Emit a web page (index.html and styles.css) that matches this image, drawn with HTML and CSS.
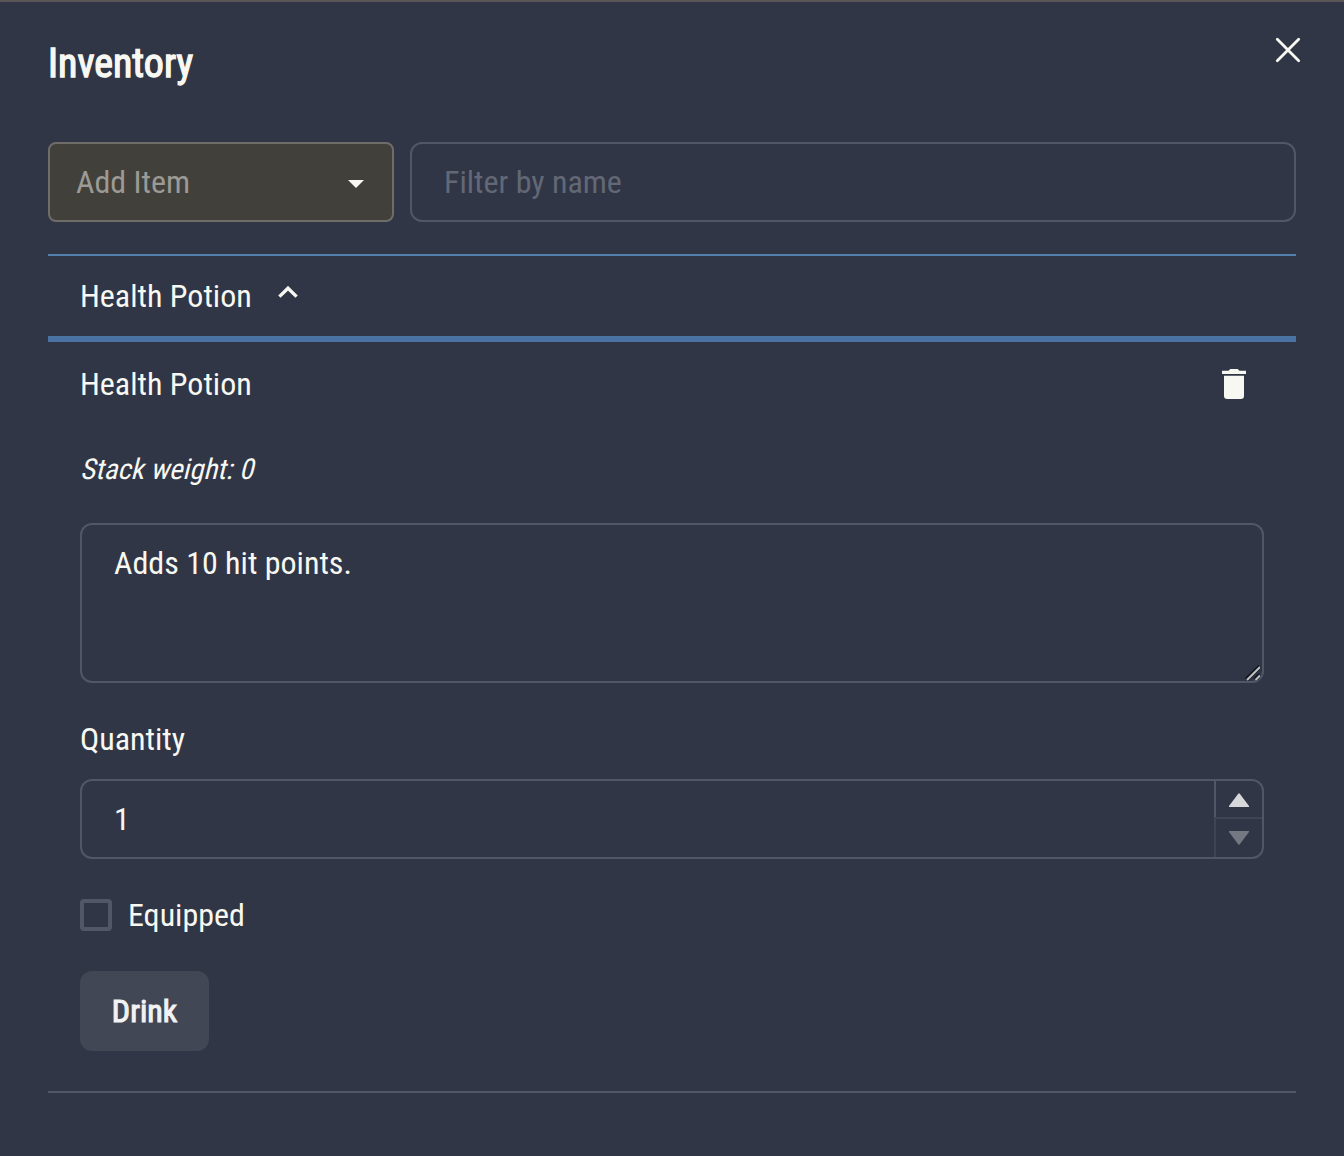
FILE: index.html
```html
<!DOCTYPE html>
<html lang="en">
<head>
<meta charset="utf-8">
<title>Inventory</title>
<link rel="stylesheet" href="styles.css">
</head>
<body>
<main class="panel">
  <header class="header">
    <h1 class="title"><span class="text">Inventory</span></h1>
    <button class="icon-button close" aria-label="Close">
      <svg width="26" height="26" viewBox="0 0 26 26"><path d="M2.300 2.300 23.700 23.700M23.700 2.300 2.300 23.700" fill="none" stroke="currentColor" stroke-width="2.800" stroke-linecap="round"/></svg>
    </button>
  </header>
  <div class="toolbar">
    <div class="select"><span class="text">Add Item</span>
      <svg width="16" height="8" viewBox="0 0 16 8"><path d="M0 0h16L8 8z" fill="#f8f8f2"/></svg>
    </div>
    <div class="field filter"><span class="text">Filter by name</span></div>
  </div>
  <section class="item">
    <div class="item-summary"><span class="text">Health Potion</span>
      <svg class="chevron" width="20" height="12" viewBox="0 0 20 12"><path d="M1.4 10.6 10 2.2l8.6 8.4" fill="none" stroke="currentColor" stroke-width="3.4"/></svg>
    </div>
    <div class="item-body">
      <div class="item-head"><span class="text">Health Potion</span>
        <button class="icon-button trash" aria-label="Delete">
          <svg width="24" height="30" viewBox="0 0 24 30"><path d="M0 1.7h6.5L8.3 0h7.4l1.8 1.7H24V5H0zM2 6.7h20v20.1Q22 30 18.800 30H5.200Q2 30 2 26.800z" fill="currentColor"/></svg>
        </button>
      </div>
      <p class="weight"><span class="text slanted">Stack weight: 0</span></p>
      <div class="field description"><span class="text">Adds 10 hit points.</span>
        <svg class="grip" width="15" height="16" viewBox="0 0 15 16"><g fill="none" stroke="#141920" stroke-width="4.500"><path d="M1.500 14.500 15 1.500M10 14.500 15 10"/></g><g fill="none" stroke="#c0c1c2" stroke-width="2"><path d="M2 15 15 2M10.500 15 15 10.500"/></g></svg>
      </div>
      <div class="label"><span class="text">Quantity</span></div>
      <div class="field quantity"><span class="text">1</span>
        <div class="stepper">
          <div class="step up"><svg width="20" height="14" viewBox="0 0 20 14"><path d="M9.2.8Q10-.4 10.800.8L20 13v1H0v-1z" fill="#d5d7da"/></svg></div>
          <div class="step down"><svg width="20" height="14" viewBox="0 0 20 14"><path d="M9.2 13.200Q10 14.400 10.800 13.200L20 1V0H0v1z" fill="#747882"/></svg></div>
        </div>
      </div>
      <div class="check-row"><span class="checkbox"></span><span class="text">Equipped</span></div>
      <button class="drink"><span class="text">Drink</span></button>
    </div>
  </section>
</main>
</body>
</html>
```
FILE: styles.css
```css
* { box-sizing: border-box; }
body {
  margin: 0;
  background: #303646;
  color: #f8f8f2;
  font: 32px/40px "Roboto Condensed", Roboto, sans-serif;
  font-stretch: 75%;
}
svg { display: block; flex: none; }
button { border: 0; padding: 0; background: none; color: inherit; font: inherit; }
.text { white-space: nowrap; }
.panel { height: 1156px; padding: 0 48px; border-top: 2px solid #595655; }
.header { display: flex; justify-content: space-between; height: 140px; padding-top: 35px; }
.title { margin: 0; font-size: 40px; line-height: 54px; font-weight: 400; -webkit-text-stroke: 1.300px currentColor; }
.close { align-self: flex-start; margin-right: -5px; }
.toolbar { display: flex; gap: 16px; height: 112px; }
.select {
  display: flex; align-items: center; justify-content: space-between;
  width: 346px; height: 80px; padding: 0 28px 0 26px;
  border: 2px solid #6f6d69; border-radius: 8px;
  background: #42403b; color: #9b9a96;
}
.select svg { margin-top: 4px; }
.field { display: flex; align-items: center; height: 80px; padding-left: 32px; border: 2px solid #515766; border-radius: 12px; }
.filter { flex: 1; color: #626875; }
.item { height: 839px; border-top: 2px solid #5480af; border-bottom: 2px solid #515766; }
.item-summary { display: flex; align-items: center; gap: 26px; height: 86px; padding-left: 32px; border-bottom: 6px solid #4a72a2; }
.chevron { margin-top: -8px; }
.item-body { padding: 0 32px; }
.item-head { display: flex; align-items: center; justify-content: space-between; height: 84px; padding-right: 18px; }
.trash { align-self: center; }
.weight { height: 97px; margin: 0; padding-top: 23px; font-size: 28.800px; }
.slanted { display: inline-block; transform: skewX(-14deg); transform-origin: 0 30px; }
.description { position: relative; height: 160px; padding-top: 18px; align-items: flex-start; }
.grip { position: absolute; right: 2px; bottom: 0; }
.label { height: 96px; padding-top: 36px; }
.quantity { justify-content: space-between; }
.stepper { display: flex; flex-direction: column; width: 48px; height: 76px; }
.step { display: flex; align-items: center; justify-content: center; height: 38px; border-left: 2px solid #515766; }
.up { height: 36px; padding-top: 2px; }
.down { height: 40px; padding-bottom: 1px; border-top: 2px solid #3e4453; border-left-color: #3e4453; }
.check-row { display: flex; align-items: center; gap: 16px; height: 112px; }
.checkbox { width: 32px; height: 32px; border: 4px solid #515766; border-radius: 4px; }
.drink { display: block; width: 129px; height: 80px; border-radius: 12px; background: #414754; color: #f0f2f4; -webkit-text-stroke: 1.100px currentColor; }
```
